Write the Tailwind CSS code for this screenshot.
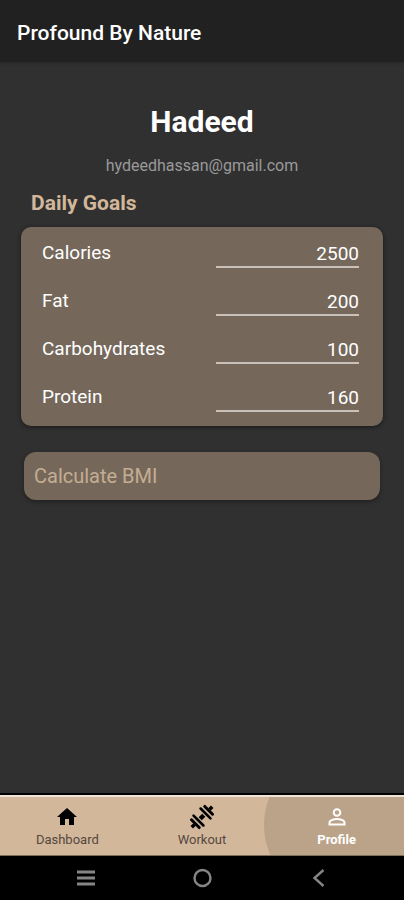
<!DOCTYPE html>
<html lang="en">
<head>
<meta charset="utf-8">
<meta name="viewport" content="width=device-width, initial-scale=1">
<title>Profound By Nature</title>
<script src="https://cdn.jsdelivr.net/npm/@tailwindcss/browser@4"></script>
</head>
<body class="flex min-h-screen flex-col bg-[#303030] font-[Roboto,sans-serif] text-white">
<header class="bg-[#212121] px-[17px] pt-[19px] pb-[15px] shadow-[0_1px_3px_#262626]">
  <h1 class="text-[21px] leading-7 font-medium">Profound By Nature</h1>
</header>
<main class="flex flex-1 flex-col px-[21px] pt-10">
  <h2 class="text-center text-[30px] leading-10 font-bold">Hadeed</h2>
  <p class="mt-3 text-center text-base leading-6 text-[#9a9a9a]">hydeedhassan@gmail.com</p>
  <h3 class="mt-[13px] px-[10px] text-[21px] leading-6 font-bold text-[#d2b79b]">Daily Goals</h3>
  <form class="mt-3 rounded-[10px] bg-[#75685b] pt-[2px] pr-6 pb-[5px] pl-[21px] shadow-[0_1px_4px_#181818]">
    <div class="flex h-12 items-center justify-between">
      <label for="calories" class="text-[19px] leading-6">Calories</label>
      <input id="calories" inputmode="numeric" value="2500" class="mt-[2px] h-7 w-[45%] border-b-2 border-[#c9c2ba] text-right text-[19px] leading-6 outline-none">
    </div>
    <div class="flex h-12 items-center justify-between">
      <label for="fat" class="text-[19px] leading-6">Fat</label>
      <input id="fat" inputmode="numeric" value="200" class="mt-[2px] h-7 w-[45%] border-b-2 border-[#c9c2ba] text-right text-[19px] leading-6 outline-none">
    </div>
    <div class="flex h-12 items-center justify-between">
      <label for="carbs" class="text-[19px] leading-6">Carbohydrates</label>
      <input id="carbs" inputmode="numeric" value="100" class="mt-[2px] h-7 w-[45%] border-b-2 border-[#c9c2ba] text-right text-[19px] leading-6 outline-none">
    </div>
    <div class="flex h-12 items-center justify-between">
      <label for="protein" class="text-[19px] leading-6">Protein</label>
      <input id="protein" inputmode="numeric" value="160" class="mt-[2px] h-7 w-[45%] border-b-2 border-[#c9c2ba] text-right text-[19px] leading-6 outline-none">
    </div>
  </form>
  <button type="button" class="mx-[3px] mt-[26px] h-12 rounded-xl bg-[#75685b] px-[10px] text-left text-xl leading-6 text-[#c5ad92] shadow-[0_2px_4px_#202020]">Calculate BMI</button>
</main>
<nav aria-label="Sections" class="relative grid h-[63px] grid-cols-3 overflow-hidden border-t-2 border-b border-t-black border-b-[#7d6d5c] bg-[#d2b79b] text-center text-[13px] leading-4 text-[#54483e] inset-shadow-[0_2px_0_#efe3d8]">
  <a href="#dashboard" class="flex flex-col items-center gap-[3px] pt-[10px]">
    <svg class="size-6" viewBox="0 0 24 24" fill="#000" aria-hidden="true"><path d="M10 20v-6h4v6h5v-8h3L12 3 2 12h3v8z"/></svg>
    <span>Dashboard</span>
  </a>
  <a href="#workout" class="flex flex-col items-center gap-[3px] pt-[10px]">
    <svg class="size-6 overflow-visible" viewBox="0 0 24 24" fill="none" stroke="#000" aria-hidden="true">
      <g transform="rotate(-45 12 12)">
        <path d="M9.500 12h5" stroke-width="4.500"/>
        <path d="M7 5v14M17 5v14" stroke-width="2.600" stroke-linecap="round"/>
        <path d="M2.600 6.500v11M21.400 6.500v11" stroke-width="3" stroke-linecap="round"/>
        <path d="M-2.500 12h4M22.500 12h4" stroke-width="3.500"/>
      </g>
    </svg>
    <span>Workout</span>
  </a>
  <a href="#profile" aria-current="page" class="relative flex flex-col items-center gap-[3px] pt-[10px] font-bold text-white">
    <span class="absolute top-1/2 left-1/2 size-[146px] -translate-1/2 rounded-full bg-[#bba389]"></span>
    <svg class="relative size-6" viewBox="0 0 24 24" fill="none" stroke="#fff" stroke-width="2" aria-hidden="true"><circle cx="12" cy="7.500" r="3.300"/><path d="M4.500 19.500v-2c0-2.200 4.800-3.500 7.500-3.500s7.500 1.300 7.500 3.500v2z"/></svg>
    <span class="relative">Profile</span>
    <span class="absolute inset-x-[-24px] top-0 h-[2px] bg-[#efe3d8]"></span>
  </a>
</nav>
<footer class="flex h-11 items-center justify-between bg-black px-[74px]">
  <button type="button" aria-label="Recent apps"><svg class="size-6" viewBox="0 0 24 24" stroke="#858585" stroke-width="3" fill="none"><path d="M3 6h18M3 12h18M3 18h18"/></svg></button>
  <button type="button" aria-label="Home"><svg class="size-6" viewBox="0 0 24 24" stroke="#858585" stroke-width="2.400" fill="none"><circle cx="12.500" cy="12" r="8"/></svg></button>
  <button type="button" aria-label="Back"><svg class="size-6" viewBox="0 0 24 24" stroke="#858585" stroke-width="2.400" fill="none"><path d="M17.500 4L8.500 12l9 8"/></svg></button>
</footer>
</body>
</html>
